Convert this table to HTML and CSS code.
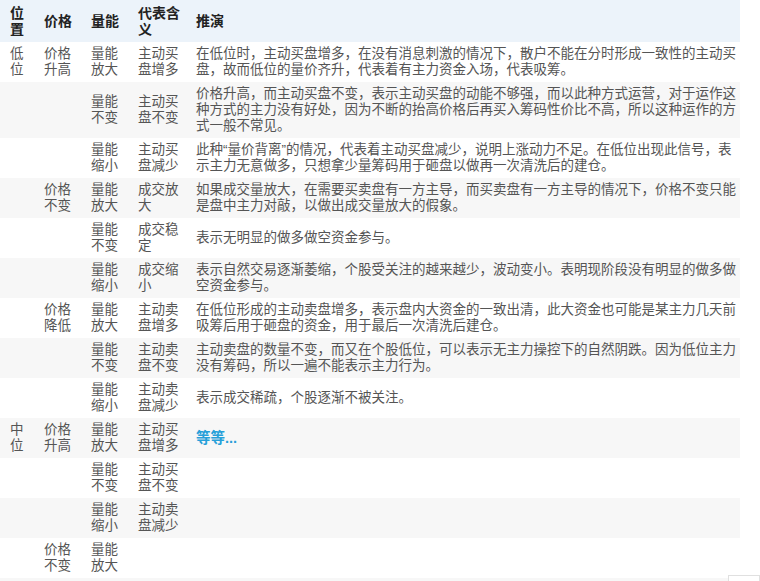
FILE: index.html
```html
<!DOCTYPE html>
<html lang="zh-CN">
<head>
<meta charset="utf-8">
<title>量价关系</title>
<link rel="stylesheet" href="styles.css">
</head>
<body>
<table class="vp-table">
  <colgroup>
    <col class="c-pos">
    <col class="c-price">
    <col class="c-vol">
    <col class="c-mean">
    <col class="c-deduce">
  </colgroup>
  <thead>
    <tr><th>位置</th><th>价格</th><th>量能</th><th>代表含义</th><th>推演</th></tr>
  </thead>
  <tbody>
    <tr><td>低位</td><td>价格升高</td><td>量能放大</td><td>主动买盘增多</td><td>在低位时，主动买盘增多，在没有消息刺激的情况下，散户不能在分时形成一致性的主动买盘，故而低位的量价齐升，代表着有主力资金入场，代表吸筹。</td></tr>
    <tr><td></td><td></td><td>量能不变</td><td>主动买盘不变</td><td>价格升高，而主动买盘不变，表示主动买盘的动能不够强，而以此种方式运营，对于运作这<br>种方式的主力没有好处，因为不断的抬高价格后再买入筹码性价比不高，所以这种运作的方式一般不常见。</td></tr>
    <tr><td></td><td></td><td>量能缩小</td><td>主动买盘减少</td><td>此种“量价背离”的情况，代表着主动买盘减少，说明上涨动力不足。在低位出现此信号，表示主力无意做多，只想拿少量筹码用于砸盘以做再一次清洗后的建仓。</td></tr>
    <tr><td></td><td>价格不变</td><td>量能放大</td><td>成交放大</td><td>如果成交量放大，在需要买卖盘有一方主导，而买卖盘有一方主导的情况下，价格不变只能是盘中主力对敲，以做出成交量放大的假象。</td></tr>
    <tr><td></td><td></td><td>量能不变</td><td>成交稳定</td><td>表示无明显的做多做空资金参与。</td></tr>
    <tr><td></td><td></td><td>量能缩小</td><td>成交缩小</td><td>表示自然交易逐渐萎缩，个股受关注的越来越少，波动变小。表明现阶段没有明显的做多做空资金参与。</td></tr>
    <tr><td></td><td>价格降低</td><td>量能放大</td><td>主动卖盘增多</td><td>在低位形成的主动卖盘增多，表示盘内大资金的一致出清，此大资金也可能是某主力几天前吸筹后用于砸盘的资金，用于最后一次清洗后建仓。</td></tr>
    <tr><td></td><td></td><td>量能不变</td><td>主动卖盘不变</td><td>主动卖盘的数量不变，而又在个股低位，可以表示无主力操控下的自然阴跌。因为低位主力没有筹码，所以一遍不能表示主力行为。</td></tr>
    <tr><td></td><td></td><td>量能缩小</td><td>主动卖盘减少</td><td>表示成交稀疏，个股逐渐不被关注。</td></tr>
    <tr><td>中位</td><td>价格升高</td><td>量能放大</td><td>主动买盘增多</td><td><span class="more">等等...</span></td></tr>
    <tr><td></td><td></td><td>量能不变</td><td>主动买盘不变</td><td></td></tr>
    <tr><td></td><td></td><td>量能缩小</td><td>主动卖盘减少</td><td></td></tr>
    <tr><td></td><td>价格不变</td><td>量能放大</td><td></td><td></td></tr>
    <tr><td></td><td></td><td></td><td></td><td></td></tr>
  </tbody>
</table>
<div class="corner-btn"></div>
</body>
</html>
```
FILE: styles.css
```css
html, body {
  margin: 0;
  padding: 0;
  background: #fff;
}
body {
  font-family: "Liberation Sans", "Noto Sans CJK SC", sans-serif;
  font-size: 13.5px;
  color: #555;
  overflow: hidden;
}
.vp-table {
  width: 740px;
  border-collapse: collapse;
  table-layout: fixed;
}
.c-pos { width: 34px; }
.c-price { width: 47px; }
.c-vol { width: 47px; }
.c-mean { width: 58px; }
.c-deduce { width: 554px; }

.vp-table th,
.vp-table td {
  padding: 4px 2px 4px 10px;
  line-height: 16px;
  text-align: left;
  vertical-align: middle;
  word-break: break-all;
}
.vp-table th {
  padding-top: 5px;
  padding-bottom: 5px;
  background: #ecf3fa;
  color: #222;
  font-weight: bold;
  font-size: 14px;
}
.vp-table tbody tr:nth-child(even) td {
  background: #f7f7f7;
}
.vp-table td {
  height: 32px;
}
.more {
  color: #27a0d9;
  font-weight: bold;
  font-size: 14.5px;
}
.corner-btn {
  position: fixed;
  right: 0;
  bottom: -26px;
  width: 30px;
  height: 30px;
  border: 1px solid #e0e0e0;
  background: #fff;
}
```
